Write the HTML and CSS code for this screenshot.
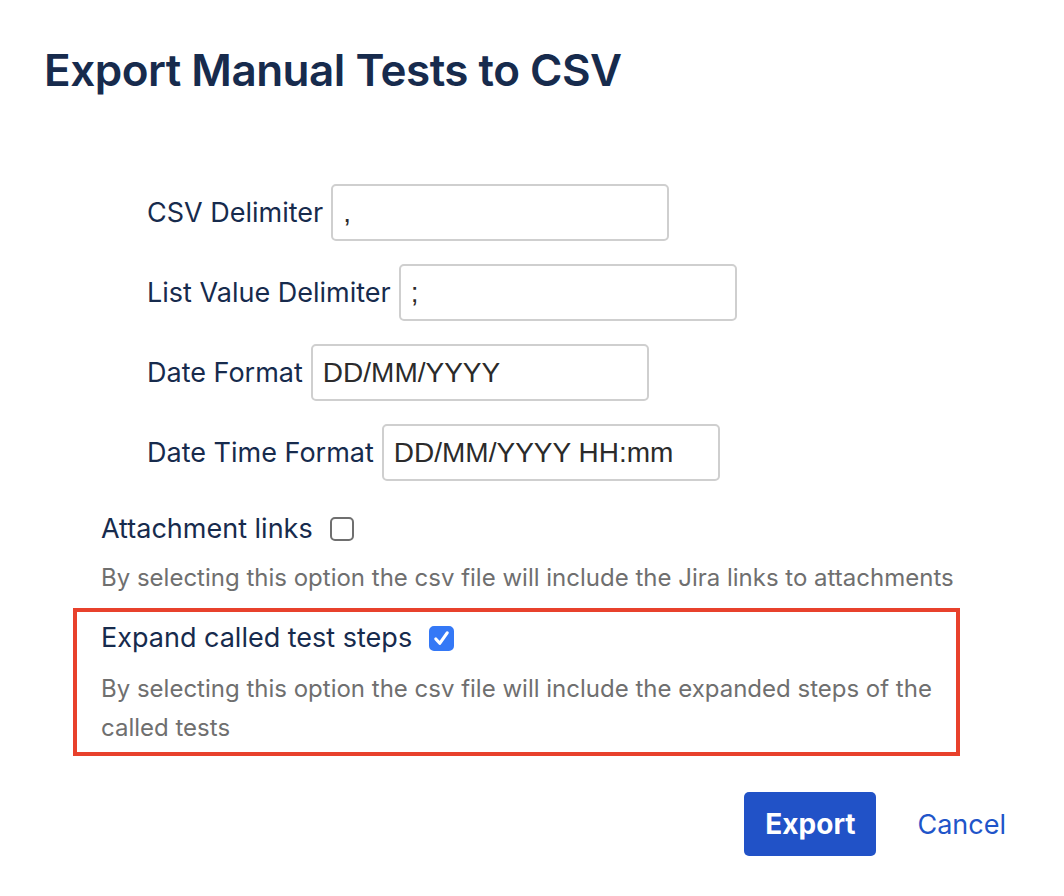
FILE: index.html
```html
<!DOCTYPE html>
<html lang="en">
<head>
    <meta charset="UTF-8">
    <meta name="viewport" content="width=device-width, initial-scale=1.0">
    <title>Export Manual Tests to CSV</title>
    <link rel="stylesheet" href="styles.css">
</head>
<body>
    <div class="dialog">
        <h1 class="dialog-title">Export Manual Tests to CSV</h1>

        <form class="export-form">
            <!-- Delimiters and formats -->
            <div class="fields">
                <div class="field">
                    <label class="field-label" for="csvDelimiter">CSV Delimiter</label>
                    <input class="text-input" id="csvDelimiter" type="text" value=",">
                </div>
                <div class="field">
                    <label class="field-label" for="listDelimiter">List Value Delimiter</label>
                    <input class="text-input" id="listDelimiter" type="text" value=";">
                </div>
                <div class="field">
                    <label class="field-label" for="dateFormat">Date Format</label>
                    <input class="text-input" id="dateFormat" type="text" value="DD/MM/YYYY">
                </div>
                <div class="field">
                    <label class="field-label" for="dateTimeFormat">Date Time Format</label>
                    <input class="text-input" id="dateTimeFormat" type="text" value="DD/MM/YYYY HH:mm">
                </div>
            </div>

            <!-- Options -->
            <div class="option">
                <label class="option-label">
                    Attachment links
                    <input class="checkbox" type="checkbox">
                </label>
                <p class="option-desc">By selecting this option the csv file will include the Jira links to attachments</p>
            </div>

            <div class="option option-highlight">
                <label class="option-label">
                    Expand called test steps
                    <input class="checkbox" type="checkbox" checked>
                </label>
                <p class="option-desc">By selecting this option the csv file will include the expanded steps of the called tests</p>
            </div>

            <div class="actions">
                <button class="btn-primary" type="button">Export</button>
                <a class="btn-link" href="#">Cancel</a>
            </div>
        </form>
    </div>
</body>
</html>
```

FILE: styles.css
```css
* {
    margin: 0;
    padding: 0;
    box-sizing: border-box;
    font-family: Inter, 'Noto Sans', sans-serif;
}

body {
    background: #fff;
    color: #172b4d;
}

.dialog {
    padding: 40px 44px 0 44px;
}

.dialog-title {
    font-size: 44px;
    font-weight: 600;
    line-height: 60px;
    letter-spacing: -0.5px;
    color: #172b4d;
}

.export-form {
    margin-top: 84px;
}

.fields {
    display: flex;
    flex-direction: column;
    gap: 23px;
    padding-left: 103px;
}

.field {
    display: flex;
    align-items: center;
    gap: 8px;
}

.field-label {
    font-size: 27px;
    color: #172b4d;
}

.text-input {
    width: 338px;
    height: 57px;
    padding: 0 10px;
    border: 2px solid #cfcfcf;
    border-radius: 5px;
    font-family: 'Liberation Sans', Arial, sans-serif;
    font-size: 28px;
    color: #2b2b2b;
    outline: none;
}

.option {
    margin-left: 29px;
    border: 4px solid transparent;
    padding: 0 24px;
}

.option + .option {
    margin-top: 7px;
}

.fields + .option {
    margin-top: 24px;
}

.option-label {
    display: flex;
    align-items: center;
    gap: 17px;
    font-size: 27px;
    line-height: 40px;
    color: #172b4d;
}

.option-desc {
    margin-top: 9px;
    font-size: 24px;
    line-height: 39px;
    color: #6f6f6f;
}

.option-highlight {
    margin-right: 60px;
    border-color: #e8412c;
    padding-top: 6px;
    padding-bottom: 5px;
}

.option-highlight .option-desc {
    margin-top: 11px;
}

.checkbox {
    appearance: none;
    width: 24px;
    height: 24px;
    border: 2px solid #6f6f6f;
    border-radius: 5px;
    background: #fff;
}

.checkbox:checked {
    width: 25px;
    height: 25px;
    border-color: #3478f6;
    background: #3478f6 url("data:image/svg+xml;utf8,<svg xmlns='http://www.w3.org/2000/svg' viewBox='0 0 24 24'><path d='M5.5 12.5l4.5 5 8.5-12' fill='none' stroke='white' stroke-width='3.6' stroke-linecap='round' stroke-linejoin='round'/></svg>") center / 100% no-repeat;
}

.actions {
    display: flex;
    justify-content: flex-end;
    align-items: center;
    gap: 41px;
    margin-top: 36px;
    padding-right: 14px;
}

.btn-primary {
    width: 132px;
    height: 64px;
    border: none;
    border-radius: 5px;
    background-color: #2152c7;
    color: #fff;
    font-size: 28px;
    font-weight: 700;
    cursor: pointer;
}

.btn-link {
    color: #1f55c9;
    font-size: 27px;
    text-decoration: none;
}
```
